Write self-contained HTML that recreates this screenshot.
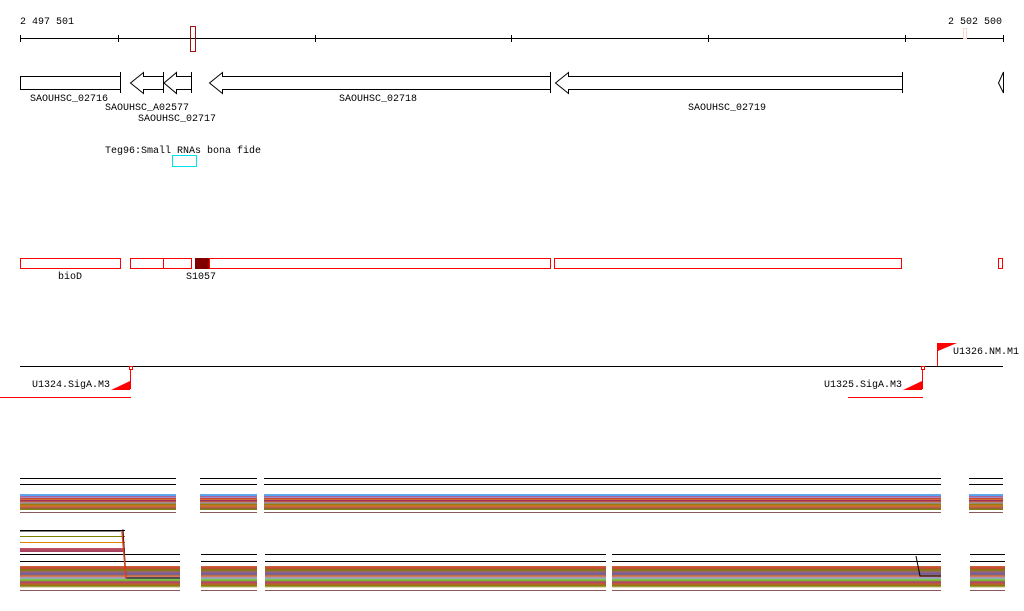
<!DOCTYPE html>
<html><head><meta charset="utf-8"><style>
body{margin:0;background:#fff;width:1024px;height:611px;overflow:hidden;position:relative;font-family:"Liberation Mono",monospace;font-size:10px;}
svg{position:absolute;left:0;top:0}
.b{position:absolute}
.t1{background:linear-gradient(to bottom,#000 0,#000 1px,transparent 1px,transparent 6px,#000 6px,#000 7px,transparent 7px,transparent 16px,#6fa8dc 16px,#4aa3ff 18px,#b05090 18px,#a0a0d0 20px,#c0392b 20px,#e08040 22px,#8b1a6b 22px,#d06a3a 24px,#9aa0e0 25px,#808000 26px,#e07030 28px,#a05a4a 30px,#6f8f00 32px,#fff 32px,#fff 34px,#8a5a5a 34px,#8a5a5a 35px,transparent 35px)}
.t2{background:linear-gradient(to bottom,transparent 0,transparent 24px,#000 24px,#000 25px,transparent 25px,transparent 31px,#000 31px,#000 32px,transparent 32px,transparent 36px,#c07030 36px,#d04040 38px,#808000 40px,#a06080 42px,#6060a0 44px,#e07030 46px,#9aa0e0 48px,#70d020 50px,#b04070 52px,#c06030 54px,#808000 56px,#fff 58px,#fff 60px,#8a5a5a 60px,#8a5a5a 61px,transparent 61px)}
</style></head><body>
<div class="b" style="left:20px;top:530px;width:105px;height:50px;background:linear-gradient(to bottom,#000 0,#000 1px,transparent 1px,transparent 6px,#808000 6px,#808000 7px,transparent 7px,transparent 12px,#e08000 12px,#e08000 13px,transparent 13px,transparent 18px,#c05060 18px,#a04060 22px,transparent 22px,transparent 38px,#9aa0e0 38px,#9aa0e0 39px,transparent 39px)"></div>
<div class="b t2" style="left:20px;top:530px;width:160px;height:68px"></div>
<div class="b t2" style="left:201px;top:530px;width:56px;height:68px"></div>
<div class="b t2" style="left:265px;top:530px;width:341px;height:68px"></div>
<div class="b t2" style="left:612px;top:530px;width:329px;height:68px"></div>
<div class="b t2" style="left:970px;top:530px;width:35px;height:68px"></div>
<div class="b t1" style="left:20px;top:478px;width:156px;height:38px"></div>
<div class="b t1" style="left:200px;top:478px;width:57px;height:38px"></div>
<div class="b t1" style="left:264px;top:478px;width:677px;height:38px"></div>
<div class="b t1" style="left:969px;top:478px;width:34px;height:38px"></div>
<svg width="1024" height="611" xmlns="http://www.w3.org/2000/svg" font-family="Liberation Mono, monospace" font-size="10">
<g stroke="#000" fill="none" stroke-width="1">
<line x1="20" y1="38.5" x2="1003" y2="38.5"/>
<path d="M20.5 35v7M118.5 35v7M315.5 35v7M511.5 35v7M708.5 35v7M905.5 35v7M1003.5 35v7"/>
<rect x="20.5" y="76.5" width="100" height="13"/><path d="M120.5 72v21"/>
<path d="M163.5 76.5H143.5V72.5L130.5 83L143.5 93.5V89.5H163.5"/>
<path d="M191.5 76.5H176.5V72.5L164 83L176.5 93.5V89.5H191.5M163.5 72v21M191.5 72v21"/>
<path d="M550.5 76.5H222.5V72.5L209.5 83L222.5 93.5V89.5H550.5M550.5 72v21"/>
<path d="M902.5 76.5H568.5V72.5L555.5 83L568.5 93.5V89.5H902.5M902.5 72v21"/>
<path d="M1003.5 72v21L998.5 83Z"/>
<line x1="20" y1="366.5" x2="1003" y2="366.5"/>
<path d="M20 531h100l3 -1 3 48h54" />
</g>
<path d="M122 531l4 48" stroke="#e04020" fill="none" stroke-width="1.5"/>
<path d="M916 556l4 20h21" stroke="#000" fill="none"/>
<rect x="190.5" y="26.5" width="5" height="25" fill="none" stroke="#a01010"/>
<rect x="963.5" y="28.5" width="3" height="10" fill="none" stroke="#f8d8c8"/>
<rect x="172.5" y="155.5" width="24" height="11" fill="none" stroke="#00e0f0"/>
<g stroke="#f00" fill="none">
<rect x="20.5" y="258.5" width="100" height="10"/>
<rect x="130.5" y="258.5" width="61" height="10"/><path d="M163.5 258v11"/>
<rect x="209.5" y="258.5" width="341" height="10"/>
<rect x="554.5" y="258.5" width="347" height="10"/>
<rect x="998.5" y="258.5" width="4" height="10"/>
<rect x="129.5" y="366.5" width="3" height="3"/><path d="M130.5 369v20M0 397.5h131"/>
<rect x="921.5" y="366.5" width="3" height="3"/><path d="M922.5 369v20M848 397.5h75"/>
<path d="M937.5 343v23"/>
</g>
<rect x="195" y="258" width="14" height="11" fill="#800000"/>
<path d="M111 390L130 381V390Z" fill="#f00"/>
<path d="M903 390L922 381V390Z" fill="#f00"/>
<path d="M938 343H957L938 351Z" fill="#f00"/>
<g fill="#000">
<text x="20" y="24">2 497 501</text>
<text x="948" y="24">2 502 500</text>
<text x="30" y="101">SAOUHSC_02716</text>
<text x="105" y="110">SAOUHSC_A02577</text>
<text x="138" y="121">SAOUHSC_02717</text>
<text x="339" y="101">SAOUHSC_02718</text>
<text x="688" y="110">SAOUHSC_02719</text>
<text x="105" y="153">Teg96:Small RNAs bona fide</text>
<text x="58" y="279">bioD</text>
<text x="186" y="279">S1057</text>
<text x="32" y="387">U1324.SigA.M3</text>
<text x="824" y="387">U1325.SigA.M3</text>
<text x="953" y="354">U1326.NM.M1</text>
</g>
</svg>
</body></html>
